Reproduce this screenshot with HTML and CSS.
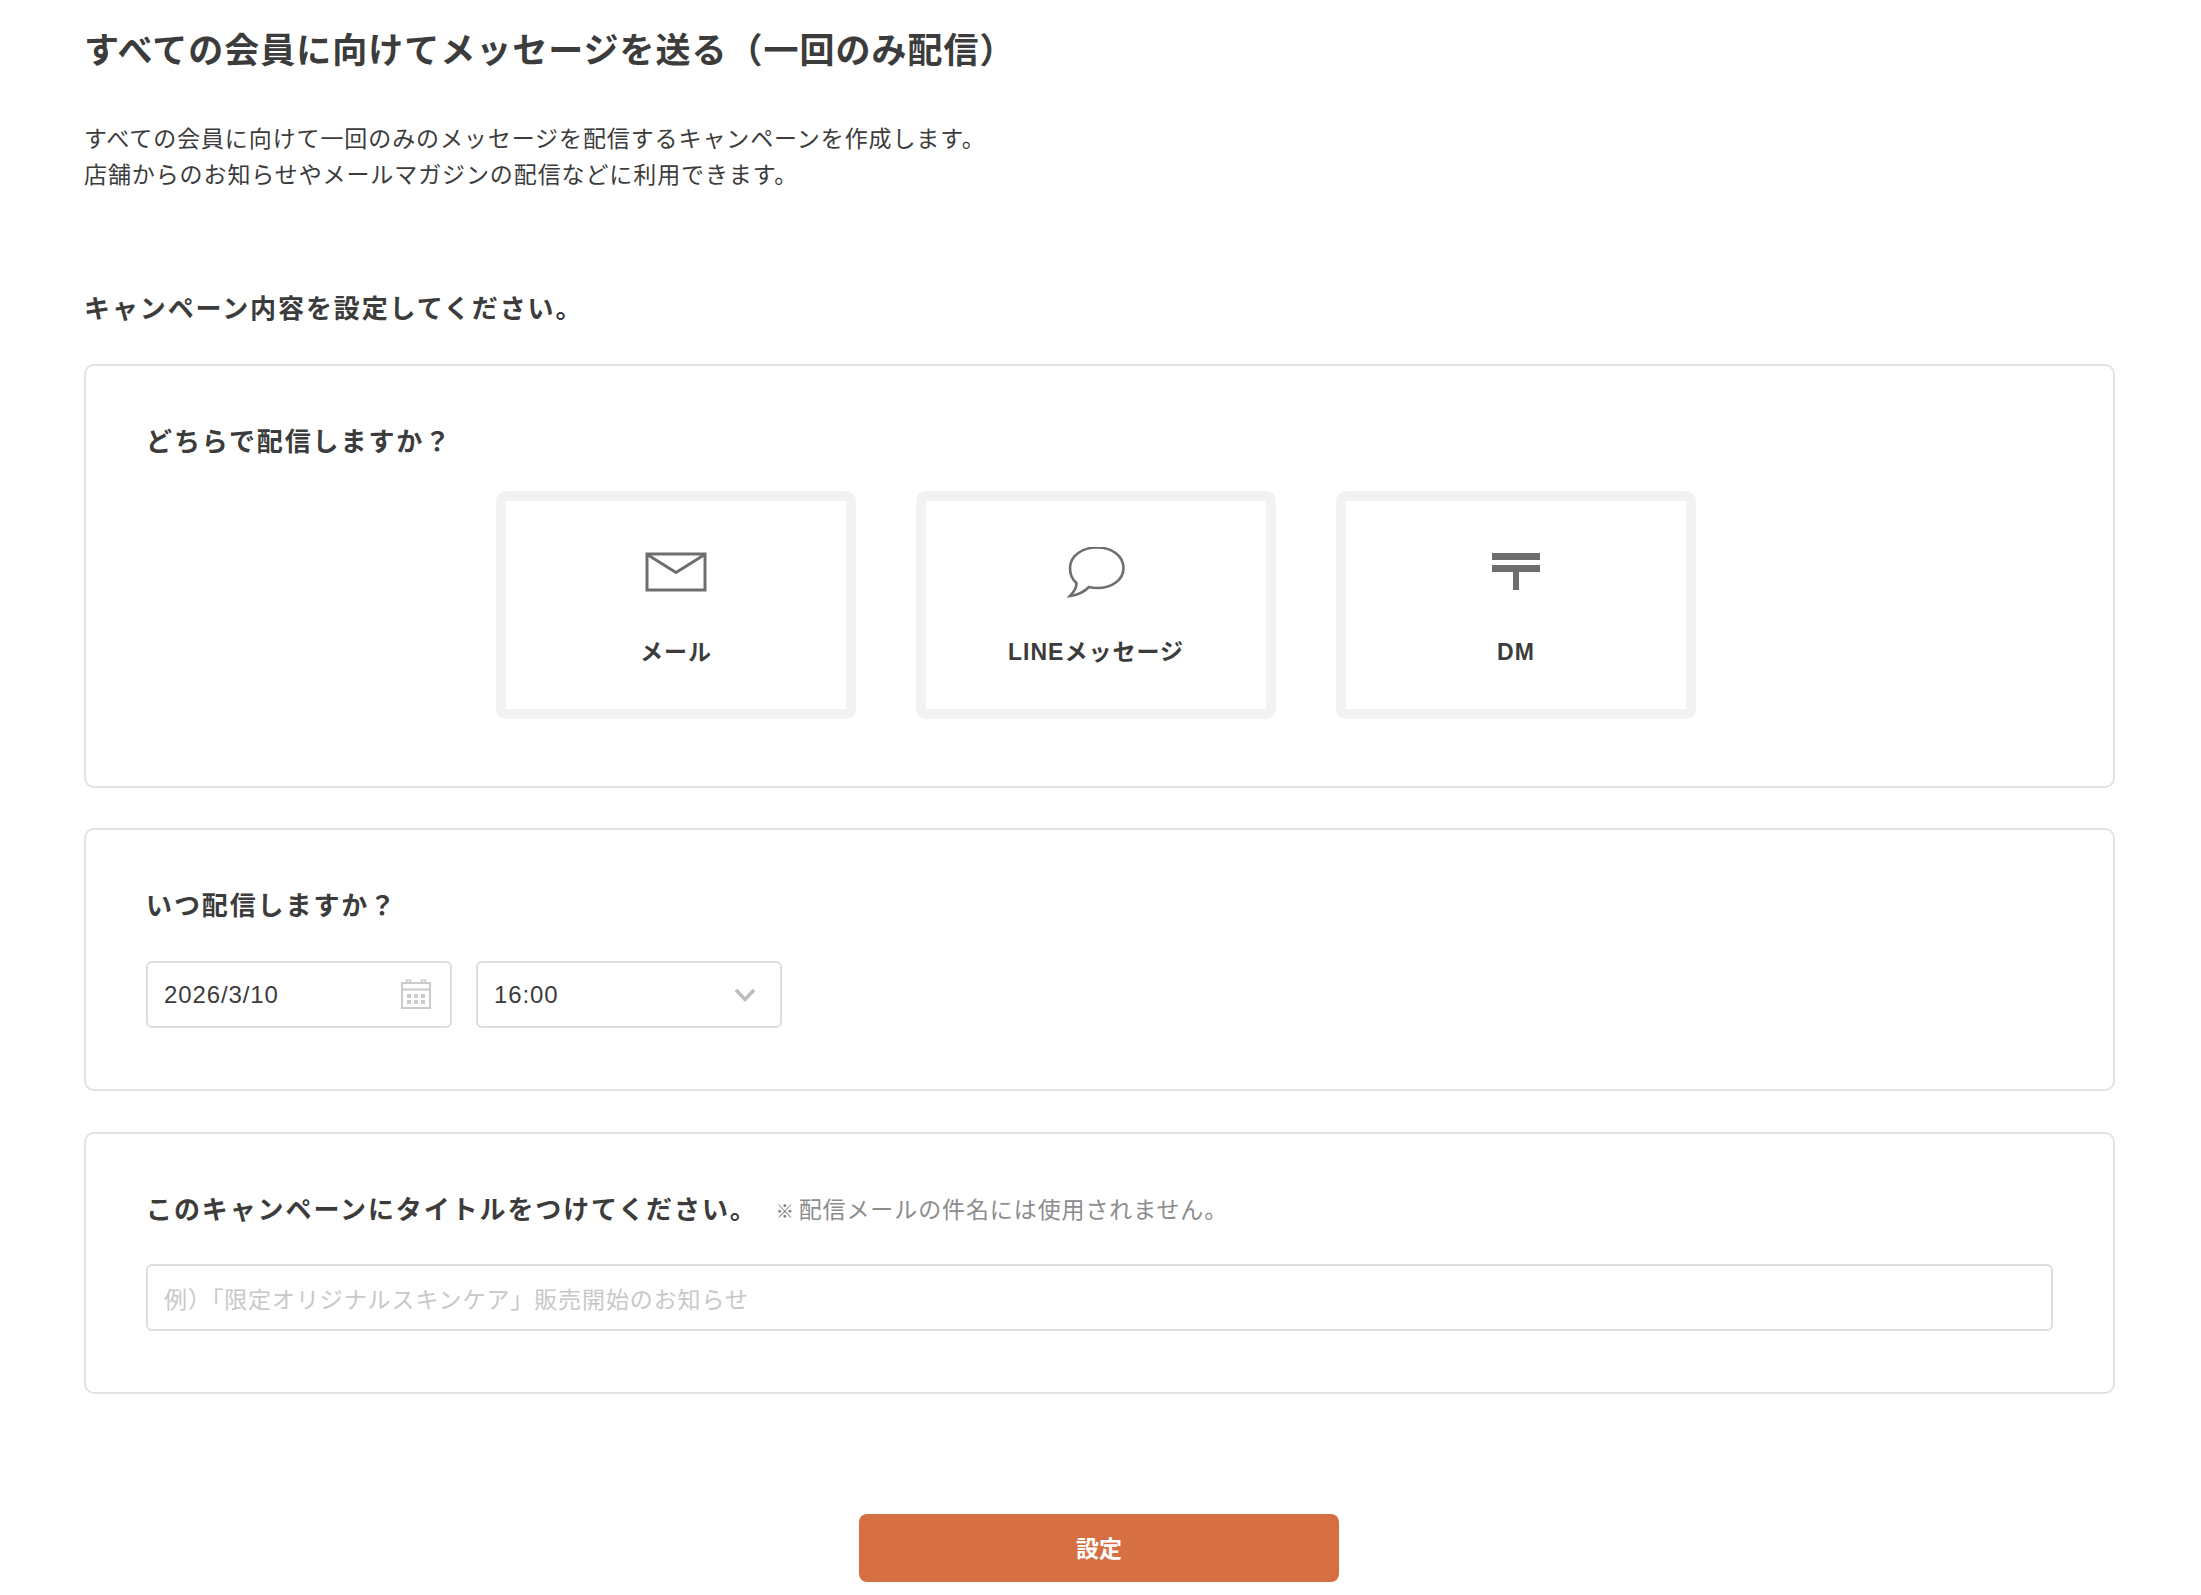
FILE: index.html
```html
<!DOCTYPE html>
<html lang="ja">
<head>
<meta charset="utf-8">
<title>キャンペーン作成</title>
<link rel="stylesheet" href="styles.css">
</head>
<body>
<main class="page">
  <h1 class="page-title">すべての会員に向けてメッセージを送る（一回のみ配信）</h1>
  <p class="lead">すべての会員に向けて一回のみのメッセージを配信するキャンペーンを作成します。<br>店舗からのお知らせやメールマガジンの配信などに利用できます。</p>
  <h2 class="section-title">キャンペーン内容を設定してください。</h2>

  <section class="panel panel-channel">
    <h3 class="panel-title">どちらで配信しますか？</h3>
    <div class="channels">
      <div class="channel">
        <svg class="channel-icon" width="62" height="52" viewBox="0 0 62 52" fill="none" stroke="#6e6e6e">
          <rect x="2" y="7" width="58" height="36" stroke-width="3"/>
          <path d="M3 8 L31 25.500 L59 8" stroke-width="3"/>
        </svg>
        <span class="channel-label">メール</span>
      </div>
      <div class="channel">
        <svg class="channel-icon" width="62" height="52" viewBox="0 0 62 52" fill="none" stroke="#6e6e6e" stroke-width="2.600">
          <path d="M32 0.500 C47 0.500 58.500 9 58.500 21 C58.500 33 47 41 32 41 C29 41 26.500 40.700 24 40 C20 44 14 48 5 49 C9 45 11.500 41 11.500 36 C6.500 32 5 27 5 21 C5 9 17 0.500 32 0.500 Z"/>
        </svg>
        <span class="channel-label">LINEメッセージ</span>
      </div>
      <div class="channel">
        <svg class="channel-icon" width="48" height="52" viewBox="0 0 48 52" fill="#6e6e6e">
          <rect x="0" y="6" width="48" height="7"/>
          <rect x="0" y="18" width="48" height="7"/>
          <rect x="21" y="25" width="6" height="18"/>
        </svg>
        <span class="channel-label">DM</span>
      </div>
    </div>
  </section>

  <section class="panel panel-when">
    <h3 class="panel-title">いつ配信しますか？</h3>
    <div class="when-row">
      <div class="field field-short">
        <span class="field-value">2026/3/10</span>
        <svg class="calendar" width="30" height="30" viewBox="0 0 30 30" fill="none" stroke="#cbcbcb" stroke-width="2">
          <rect x="1" y="4" width="28" height="25"/>
          <path d="M1 10.500 H29" />
          <rect x="5.500" y="1" width="4" height="3" stroke-width="1.500"/>
          <rect x="20.500" y="1" width="4" height="3" stroke-width="1.500"/>
          <path d="M6 17 H10 M13 17 H17 M20 17 H24 M6 23 H10 M13 23 H17 M20 23 H24" stroke-width="4"/>
        </svg>
      </div>
      <div class="field field-short field-select">
        <span class="field-value">16:00</span>
        <svg class="chevron" width="22" height="14" viewBox="0 0 22 14" fill="none" stroke="#bdbdbd" stroke-width="3.500">
          <path d="M2 2 L11 11.500 L20 2"/>
        </svg>
      </div>
    </div>
  </section>

  <section class="panel panel-name">
    <div class="name-head">
      <h3 class="panel-title">このキャンペーンにタイトルをつけてください。</h3>
      <span class="note"><span class="note-mark">※</span>配信メールの件名には使用されません。</span>
    </div>
    <div class="field field-full">
      <span class="placeholder">例）「限定オリジナルスキンケア」販売開始のお知らせ</span>
    </div>
  </section>

  <div class="actions">
    <button class="submit" type="button">設定</button>
  </div>
</main>
</body>
</html>
```

FILE: styles.css
```css
* { box-sizing: border-box; }
html, body { margin: 0; padding: 0; background: #fff; }
body {
  font-family: "Liberation Sans", "Noto Sans CJK JP", sans-serif;
  color: #3c3c3c;
  height: 1595px;
  overflow: hidden;
}
.page { padding: 0 86px 0 84px; }
.page-title {
  margin: 0;
  padding-top: 27px;
  font-size: 35px;
  line-height: 48px;
  font-weight: 700;
  letter-spacing: 1px;
}
.lead {
  margin: 46px 0 0;
  font-size: 23px;
  line-height: 36px;
  letter-spacing: 0.900px;
}
.section-title {
  margin: 98px 0 0;
  font-size: 26px;
  line-height: 36px;
  font-weight: 700;
  letter-spacing: 1.900px;
}
.panel {
  border: 2px solid #e2e2e2;
  border-radius: 10px;
  padding: 0 60px;
}
.section-title + .panel { margin-top: 37px; }
.panel-title {
  margin: 0;
  font-size: 26px;
  line-height: 36px;
  font-weight: 700;
  letter-spacing: 1.900px;
}
.panel-channel { height: 424px; padding-top: 58px; }
.channels {
  display: flex;
  justify-content: center;
  gap: 60px;
  margin-top: 31px;
  padding-right: 7px;
}
.channel {
  width: 360px;
  height: 228px;
  border: 10px solid #f2f2f2;
  border-radius: 10px;
  display: flex;
  flex-direction: column;
  align-items: center;
}
.channel-icon { margin-top: 46px; }
.channel-label {
  margin-top: 35px;
  font-size: 23px;
  line-height: 36px;
  font-weight: 700;
  letter-spacing: 1px;
}
.panel-when { height: 263px; padding-top: 58px; margin-top: 40px; }
.when-row { display: flex; gap: 24px; margin-top: 37px; }
.field {
  height: 67px;
  border: 2px solid #dedede;
  border-radius: 6px;
  background: #fff;
  display: flex;
  align-items: center;
  justify-content: space-between;
  padding: 0 19px 0 16px;
}
.calendar { margin-bottom: 1px; }
.field-short { width: 306px; }
.field-select { padding-right: 24px; }
.field-value {
  font-size: 24px;
  letter-spacing: 0.900px;
}
.panel-name { height: 262px; padding-top: 56px; margin-top: 41px; }
.name-head { display: flex; align-items: center; gap: 18px; }
.note {
  font-size: 23px;
  line-height: 36px;
  color: #8c8c8c;
  letter-spacing: 0.900px;
  padding-top: 2px;
}
.note-mark { font-size: 18px; margin-right: 4px; color: #777; }
.field-full { margin-top: 34px; }
.placeholder {
  font-size: 23px;
  color: #c8c8c8;
  letter-spacing: 0.900px;
}
.actions { display: flex; justify-content: center; margin-top: 120px; padding-right: 1px; }
.submit {
  width: 480px;
  height: 68px;
  border: 0;
  border-radius: 8px;
  padding: 0 0 3px;
  background: #d67042;
  color: #fff;
  font: 700 23px "Noto Sans CJK JP", sans-serif;
  letter-spacing: 0;
}
```
